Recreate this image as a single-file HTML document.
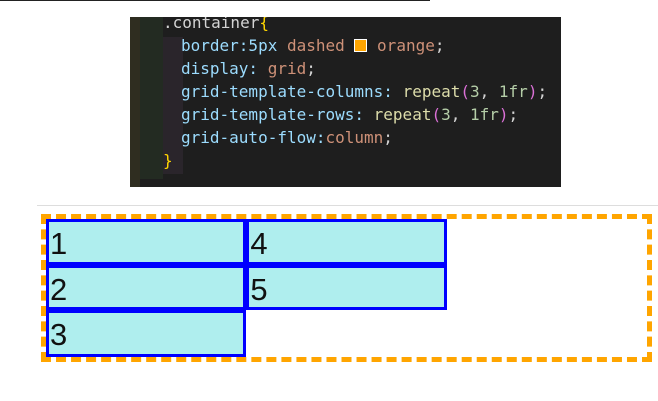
<!DOCTYPE html>
<html><head><meta charset="utf-8"><style>
body{margin:0;width:658px;height:401px;background:#fff;position:relative;overflow:hidden;font-family:"Liberation Sans",sans-serif}
.top{position:absolute;left:0;top:0;width:430px;height:1px;background:#222}
.code{position:absolute;left:130px;top:17px;width:431px;height:170px;background:#1e1e1e;font-family:"DejaVu Sans Mono",monospace;font-size:16px;color:#9cdcfe;overflow:hidden}
.g1{position:absolute;left:0;top:0;width:10px;height:170px;background:#2f2d20}
.g2{position:absolute;left:10px;top:0;width:23px;height:162px;background:#232b22}
.g3{position:absolute;left:33px;top:20px;width:20px;height:137px;background:#2a252b}
.ln{position:absolute;left:33px;white-space:pre;line-height:23px}
.o{color:#ce9178}.y{color:#ffd700}.f{color:#dcdcaa}.n{color:#b5cea8}.p{color:#da70d6}.w{color:#d4d4d4}
.sep{position:absolute;left:37px;top:205px;width:621px;height:1px;background:#ddd}
.c{position:absolute;left:41px;top:214px;width:601px;height:138px;border:5px dashed orange;display:grid;grid-template-columns:repeat(3,1fr);grid-template-rows:46px 45px 47px;grid-auto-flow:column}
.c div{background:#afeeee;border:3px solid blue;font-size:31px;line-height:44px;color:#111;overflow:hidden;min-height:0;padding-left:1px}
</style></head><body>
<div class="top"></div>
<div class="code"><div class="g1"></div><div class="g2"></div><div class="g3"></div>
<div class="ln" style="top:-6px;left:33px"><span class="w">.container</span><span class="y">{</span></div>
<div class="ln" style="top:17px;left:51px">border:5px <span class="o">dashed</span> <span style="display:inline-block;width:11px;height:11px;background:orange;border:1px solid #fff;vertical-align:-1px"></span> <span class="o">orange</span><span class="w">;</span></div>
<div class="ln" style="top:40px;left:51px">display: <span class="o">grid</span><span class="w">;</span></div>
<div class="ln" style="top:63px;left:51px">grid-template-columns: <span class="f">repeat</span><span class="p">(</span><span class="n">3</span><span class="w">, </span><span class="n">1fr</span><span class="p">)</span><span class="w">;</span></div>
<div class="ln" style="top:86px;left:51px">grid-template-rows: <span class="f">repeat</span><span class="p">(</span><span class="n">3</span><span class="w">, </span><span class="n">1fr</span><span class="p">)</span><span class="w">;</span></div>
<div class="ln" style="top:109px;left:51px">grid-auto-flow:<span class="o">column</span><span class="w">;</span></div>
<div class="ln y" style="top:132px;left:33px">}</div>
</div>
<div class="sep"></div>
<div class="c"><div>1</div><div>2</div><div>3</div><div>4</div><div>5</div></div>
</body></html>
